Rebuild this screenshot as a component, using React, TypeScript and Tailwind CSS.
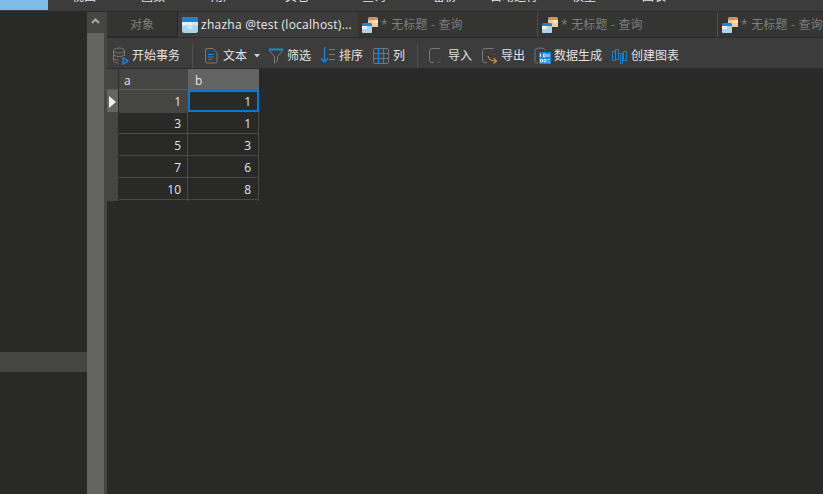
const font = { fontFamily: '"Open Sans", "Noto Sans CJK SC", sans-serif' };

const menus = [
  { label: '视图', w: 'w-[69px]' },
  { label: '函数', w: 'w-[70px]' },
  { label: '用户', w: 'w-[74px]' },
  { label: '其它', w: 'w-[77px]' },
  { label: '查询', w: 'w-[71px]' },
  { label: '备份', w: 'w-[57px]' },
  { label: '自动运行', w: 'w-[82px]' },
  { label: '模型', w: 'w-[70px]' },
  { label: '图表', w: 'w-[70px]' },
];

const rows = [
  [1, 1],
  [3, 1],
  [5, 3],
  [7, 6],
  [10, 8],
];

function TableIcon() {
  return (
    <svg width="16" height="16" viewBox="0 0 16 16" className="shrink-0">
      <rect x="0" y="0" width="16" height="16" rx="2.5" fill="#a9d6ee" />
      <path d="M0 5V2.5A2.5 2.5 0 0 1 2.5 0h11A2.5 2.5 0 0 1 16 2.5V5z" fill="#1b84d8" />
      <rect x="0" y="5" width="5" height="3.5" fill="#e6f4fb" />
      <rect x="5.5" y="5" width="5" height="3.5" fill="#e6f4fb" />
      <rect x="11" y="5" width="5" height="3.5" fill="#cfe8f5" />
      <rect x="5.5" y="9" width="5" height="3" fill="#cfe8f5" />
    </svg>
  );
}

function QueryIcon() {
  return (
    <svg width="16" height="16" viewBox="0 0 16 16" className="shrink-0">
      <rect x="6" y="0" width="10" height="10" rx="1.5" fill="#d98f5c" />
      <rect x="6" y="3" width="10" height="7" fill="#f0c9a0" />
      <rect x="11" y="3" width="5" height="3" fill="#f7e3c8" />
      <rect x="0" y="6" width="10" height="10" rx="1.5" fill="#1b84d8" />
      <rect x="0" y="9" width="10" height="7" rx="1" fill="#a9d6ee" />
      <rect x="0" y="9" width="5" height="3" fill="#e6f4fb" />
    </svg>
  );
}

function QueryTab({ w, border = true }: { w: string; border?: boolean }) {
  return (
    <div className={`flex h-full shrink-0 items-center pl-[4px] ${w} ${border ? 'border-r border-[#4f4f4f]' : ''}`}>
      <QueryIcon />
      <span className="ml-[3px] whitespace-nowrap pt-[1px] text-[12px] tracking-[0.2px] text-[#7d7d7d]">* 无标题 - 查询</span>
    </div>
  );
}

function ToolItem({ icon, label, w, gap = 'gap-[3px]' }: { icon: React.ReactNode; label: string; w: string; gap?: string }) {
  return (
    <div className={`flex shrink-0 items-center ${w} ${gap}`}>
      {icon}
      <span className="whitespace-nowrap text-[12px] text-[#e2e2e2]">{label}</span>
    </div>
  );
}

export default function App() {
  return (
    <div className="flex h-[494px] w-[823px] flex-col overflow-hidden bg-[#292928]" style={font}>
      {/* menu bar, cut off by the top of the window */}
      <div className="flex h-[12px] shrink-0 overflow-hidden border-b border-[#2b2b2b] bg-[#3c3c3c]">
        <div className="h-[10px] w-[48px] shrink-0 bg-[#7dbce9]" />
        <div className="flex pl-[24px]">
          {menus.map((m) => (
            <div key={m.label} className={`${m.w} -mt-[13px] h-[20px] shrink-0 whitespace-nowrap text-[12px] leading-[20px] text-[#e2e2e2]`}>
              {m.label}
            </div>
          ))}
        </div>
      </div>

      <div className="flex min-h-0 flex-1">
        {/* left panel */}
        <aside className="flex w-[87px] shrink-0 flex-col bg-[#292928]">
          <div className="mt-[340px] h-[20px] bg-[#454544]" />
        </aside>

        {/* panel scrollbar */}
        <div className="flex w-[17px] shrink-0 flex-col bg-[#636362]">
          <div className="flex h-[21px] items-start justify-center bg-[#454544] pt-[6px]">
            <svg width="9" height="6" viewBox="0 0 9 6">
              <path d="M1 5l3.5-3.5L8 5" fill="none" stroke="#a8a8a8" strokeWidth="2" />
            </svg>
          </div>
        </div>
        <div className="w-[3px] shrink-0 bg-[#454544]" />

        <main className="flex min-w-0 flex-1 flex-col">
          {/* tabs */}
          <div className="flex h-[25px] shrink-0 bg-[#343433]">
            <div className="flex h-full w-[71px] shrink-0 items-center justify-center border-r border-b border-[#262626] pt-[1px] text-[12px] text-[#7d7d7d]">
              对象
            </div>
            <div className="flex h-full w-[180px] shrink-0 items-center bg-[#3c3c3c] pl-[4px]">
              <TableIcon />
              <span className="ml-[3px] whitespace-nowrap pt-[1px] text-[12px] tracking-[0.25px] text-[#e8e8e8]">zhazha @test (localhost)...</span>
            </div>
            <QueryTab w="w-[180px]" />
            <QueryTab w="w-[180px]" />
            <QueryTab w="w-[180px]" border={false} />
          </div>

          {/* toolbar */}
          <div className="flex h-[32px] shrink-0 items-center border-t border-b border-[#2b2b2b] bg-[#3c3c3c] pl-[5px] pt-[5px]">
            <ToolItem
              w="w-[76px]"
              label="开始事务"
              icon={
                <svg width="17" height="18" viewBox="0 0 17 18" fill="none" className="shrink-0">
                  <ellipse cx="7" cy="3.5" rx="5.5" ry="2.5" stroke="#777" />
                  <path d="M1.5 3.5v10c0 1.400 2.500 2.500 5 2.500M12.500 3.500V9M1.500 7c0 1.400 2.500 2.500 5.500 2.500S12.500 8.400 12.500 7M1.500 10.500C1.500 12 4 13 6.500 13" stroke="#777" />
                  <path d="M11 11v6l5-3z" stroke="#1d86dc" strokeWidth="1.3" />
                </svg>
              }
            />
            <div className="ml-[4px] mr-[11px] h-[24px] w-px bg-[#515151]" />
            <ToolItem
              w="w-[50px]"
              gap="gap-[4px]"
              label="文本"
              icon={
                <svg width="15" height="17" viewBox="0 0 15 17" fill="none" className="shrink-0">
                  <path d="M3 1.500h6l4 4v9a1.500 1.500 0 0 1-1.500 1.500h-8.500A1.500 1.500 0 0 1 1.500 14.500v-11.500a1.500 1.500 0 0 1 1.500-1.500z" stroke="#777" />
                  <path d="M4 7.500h6M4 10h6M4 12.500h4" stroke="#1d86dc" />
                </svg>
              }
            />
            <svg width="6" height="4" viewBox="0 0 6 4" className="mr-[8px] shrink-0">
              <path d="M0 0h6L3 3.500z" fill="#d0d0d0" />
            </svg>
            <ToolItem
              w="w-[52px]"
              label="筛选"
              icon={
                <svg width="16" height="17" viewBox="0 0 16 17" fill="none" className="shrink-0">
                  <path d="M1 2.500h14" stroke="#1d86dc" strokeWidth="2" />
                  <path d="M1 3l5.500 6.500V16l3-2V9.500L15 3" stroke="#777" />
                </svg>
              }
            />
            <ToolItem
              w="w-[53px]"
              label="排序"
              icon={
                <svg width="16" height="17" viewBox="0 0 16 17" fill="none" className="shrink-0">
                  <path d="M4.500 0v15M1 11.500L4.500 15 8 11.500" stroke="#1d86dc" strokeWidth="1.3" />
                  <path d="M9 2.500h6M9 7.500h6M9 12.500h6" stroke="#777" />
                </svg>
              }
            />
            <ToolItem
              w="w-[40px]"
              gap="gap-[4px]"
              label="列"
              icon={
                <svg width="16" height="16" viewBox="0 0 16 16" fill="none" className="shrink-0">
                  <rect x="0.500" y="0.500" width="15" height="15" rx="1.500" stroke="#777" />
                  <path d="M0 5.500h16M0 10.500h16" stroke="#777" />
                  <path d="M5.500 0v16M10.500 0v16" stroke="#1d86dc" strokeWidth="1.300" />
                </svg>
              }
            />
            <div className="ml-[4px] mr-[10px] h-[24px] w-px bg-[#515151]" />
            <ToolItem
              w="w-[53px]"
              label="导入"
              icon={
                <svg width="17" height="17" viewBox="0 0 17 17" fill="none" className="shrink-0">
                  <path d="M12 1.500H4A2.500 2.500 0 0 0 1.500 4v9A2.500 2.500 0 0 0 4 15.500h2" stroke="#777" />
                  <path d="M9 15l4-2-2 3z" stroke="#4d4d4d" />
                </svg>
              }
            />
            <ToolItem
              w="w-[53px]"
              label="导出"
              icon={
                <svg width="17" height="17" viewBox="0 0 17 17" fill="none" className="shrink-0">
                  <path d="M12.500 1.500H4A2.500 2.500 0 0 0 1.500 4v9A2.500 2.500 0 0 0 4 15.500h2M13.500 7v1" stroke="#777" />
                  <path d="M7 9c.5 3 2.500 5 8 5M12.500 11l3 3-3 2.500" stroke="#d98a3d" strokeWidth="1.200" />
                </svg>
              }
            />
            <ToolItem
              w="w-[77px]"
              label="数据生成"
              icon={
                <svg width="17" height="17" viewBox="0 0 17 17" fill="none" className="shrink-0">
                  <path d="M1 3.500v11c0 .8 1 1.500 3 1.500M1 3.500C1 2 3 1 6 1s5 1 5 2.500" stroke="#777" />
                  <rect x="5" y="5" width="12" height="12" rx="1" fill="#1d86dc" />
                  <path d="M6.500 7v3M9.500 7h1.500v3h-1.500zM13 7v3M15 7v3M6.500 12.500h2v2.500h-2zM10 12.500h2v2.500h-2zM13.500 12.500h2M13.500 15h2" stroke="#e6f4fb" strokeWidth="0.9" />
                </svg>
              }
            />
            <ToolItem
              w="w-[78px]"
              gap="gap-[4px]"
              label="创建图表"
              icon={
                <svg width="16" height="16" viewBox="0 0 16 16" fill="none" className="shrink-0">
                  <path d="M1.500 3.500h3v9h-3zM4.500 1.500h3v10h-3zM9.500 5.500h2v10h-2zM12.500 3.500h3v9h-3z" stroke="#1d86dc" strokeWidth="0.9" />
                </svg>
              }
            />
          </div>

          {/* result grid */}
          <div className="w-[152px] text-[12px] text-[#e4e4e4]">
            <div className="grid h-[21px] grid-cols-[12px_69px_71px] border-b border-[#5a5a5a] bg-[#454544]">
              <div className="border-r border-[#2b2b2b]" />
              <div className="px-[5px] leading-[23px]">a</div>
              <div className="bg-[#636362] px-[7px] leading-[23px]">b</div>
            </div>
            {rows.map((row, i) => (
              <div key={i} className="grid h-[22px] grid-cols-[12px_69px_71px] border-b border-[#4a4a4a]">
                <div className={`flex items-center justify-center border-r border-[#2b2b2b] ${i === 0 ? 'bg-[#636362]' : 'bg-[#454544]'}`}>
                  {i === 0 && (
                    <svg width="7" height="12" viewBox="0 0 7 12">
                      <path d="M0 0l7 6-7 6z" fill="#f0f0f0" />
                    </svg>
                  )}
                </div>
                <div className={`border-r border-[#4a4a4a] px-[6px] text-right leading-[23px] ${i === 0 ? 'bg-[#454544]' : ''}`}>
                  {row[0]}
                </div>
                {i === 0 ? (
                  <div className="-mt-px h-[23px] border-2 border-[#0a78d0] px-[6px] text-right leading-[21px]">{row[1]}</div>
                ) : (
                  <div className="border-r border-[#4a4a4a] px-[7px] text-right leading-[23px]">{row[1]}</div>
                )}
              </div>
            ))}
          </div>
        </main>
      </div>
    </div>
  );
}
